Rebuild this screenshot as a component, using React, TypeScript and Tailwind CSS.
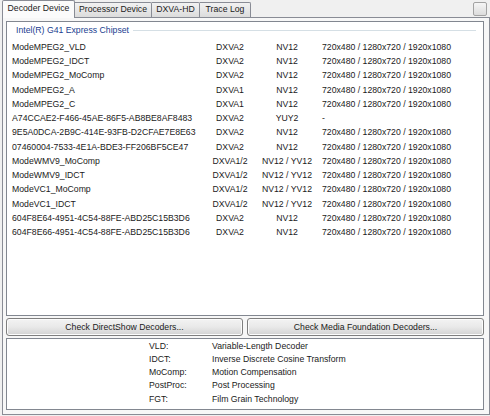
import React from 'react';

const RES = '720x480 / 1280x720 / 1920x1080';

const decoders: [string, string, string, string][] = [
  ['ModeMPEG2_VLD', 'DXVA2', 'NV12', RES],
  ['ModeMPEG2_IDCT', 'DXVA2', 'NV12', RES],
  ['ModeMPEG2_MoComp', 'DXVA2', 'NV12', RES],
  ['ModeMPEG2_A', 'DXVA1', 'NV12', RES],
  ['ModeMPEG2_C', 'DXVA1', 'NV12', RES],
  ['A74CCAE2-F466-45AE-86F5-AB8BE8AF8483', 'DXVA2', 'YUY2', '-'],
  ['9E5A0DCA-2B9C-414E-93FB-D2CFAE7E8E63', 'DXVA2', 'NV12', RES],
  ['07460004-7533-4E1A-BDE3-FF206BF5CE47', 'DXVA2', 'NV12', RES],
  ['ModeWMV9_MoComp', 'DXVA1/2', 'NV12 / YV12', RES],
  ['ModeWMV9_IDCT', 'DXVA1/2', 'NV12 / YV12', RES],
  ['ModeVC1_MoComp', 'DXVA1/2', 'NV12 / YV12', RES],
  ['ModeVC1_IDCT', 'DXVA1/2', 'NV12 / YV12', RES],
  ['604F8E64-4951-4C54-88FE-ABD25C15B3D6', 'DXVA2', 'NV12', RES],
  ['604F8E66-4951-4C54-88FE-ABD25C15B3D6', 'DXVA2', 'NV12', RES],
];

const legend: [string, string][] = [
  ['VLD:', 'Variable-Length Decoder'],
  ['IDCT:', 'Inverse Discrete Cosine Transform'],
  ['MoComp:', 'Motion Compensation'],
  ['PostProc:', 'Post Processing'],
  ['FGT:', 'Film Grain Technology'],
];

const tabs = [
  { label: 'Processor Device', w: 'w-[77px]' },
  { label: 'DXVA-HD', w: 'w-[48px]' },
  { label: 'Trace Log', w: 'w-[51px]' },
];

const WinButton: React.FC<{ label: string }> = ({ label }) => (
  <button className="flex-1 h-[18px] rounded-[3px] border border-[#7f7f7f] bg-gradient-to-b from-[#f3f3f3] via-[#e9e9e9] to-[#d2d2d2] shadow-[inset_0_0_0_1px_#fcfcfc] text-[#1a1a1a] leading-[16px]">
    {label}
  </button>
);

export default function App() {
  return (
    <div className="w-[490px] h-[416px] bg-[#f0f0f0] flex flex-col font-['Liberation_Sans',Arial,sans-serif] text-[8.7px] text-[#1a1a1a] overflow-hidden">
      {/* Tab strip */}
      <div className="flex items-end h-[17px] pl-[2px] pr-[3px]">
        <div className="relative z-10 w-[73px] h-[18px] -mb-px mt-auto flex items-center justify-center pb-[2px] bg-[#fbfbfb] border border-b-0 border-[#898c95] rounded-t-[2px]">
          Decoder Device
        </div>
        {tabs.map((t) => (
          <div
            key={t.label}
            className={`${t.w} h-[15px] flex items-center justify-center border-t border-r border-[#898c95] bg-gradient-to-b from-[#f2f2f2] to-[#dcdcdc] rounded-tr-[2px]`}
          >
            {t.label}
          </div>
        ))}
        <div className="ml-auto self-start mt-[2px] w-[14px] h-[14px] rounded-[2px] border border-[#a3a3a3] bg-gradient-to-b from-[#f6f6f6] to-[#dcdcdc]" />
      </div>

      {/* Tab page */}
      <div className="flex-1 mb-px ml-[2px] flex flex-col border border-[#898c95] bg-[#f7f7f7] pt-[3px] pl-[3px] pr-[5px] pb-[4px]">
        {/* Decoder list */}
        <div className="h-[295px] border border-[#828790] bg-white">
          <div className="flex items-center mt-px h-[14.25px] pl-[9px] pr-[7px]">
            <span className="text-[#21408f] leading-[14.25px]">Intel(R) G41 Express Chipset</span>
            <div className="flex-1 ml-[4px] h-px bg-[#d5dfe5]" />
          </div>
          <div className="mt-[2.5px] pl-[5px]">
            {decoders.map(([name, api, fmt, res], i) => (
              <div key={i} className="grid grid-cols-[189px_58px_56px_1fr] leading-[14.25px] whitespace-nowrap">
                <span>{name}</span>
                <span className="text-center">{api}</span>
                <span className="flex justify-center">{fmt}</span>
                <span className="pl-[7px]">{res}</span>
              </div>
            ))}
          </div>
        </div>

        {/* Buttons */}
        <div className="mt-[2px] flex gap-[4px]">
          <WinButton label="Check DirectShow Decoders..." />
          <WinButton label="Check Media Foundation Decoders..." />
        </div>

        {/* Legend */}
        <div className="mt-[2px] h-[72px] border border-[#828790] bg-white pt-px pl-[142px]">
          {legend.map(([k, v]) => (
            <div key={k} className="grid grid-cols-[63px_1fr] leading-[13.15px]">
              <span>{k}</span>
              <span>{v}</span>
            </div>
          ))}
        </div>
      </div>
    </div>
  );
}
